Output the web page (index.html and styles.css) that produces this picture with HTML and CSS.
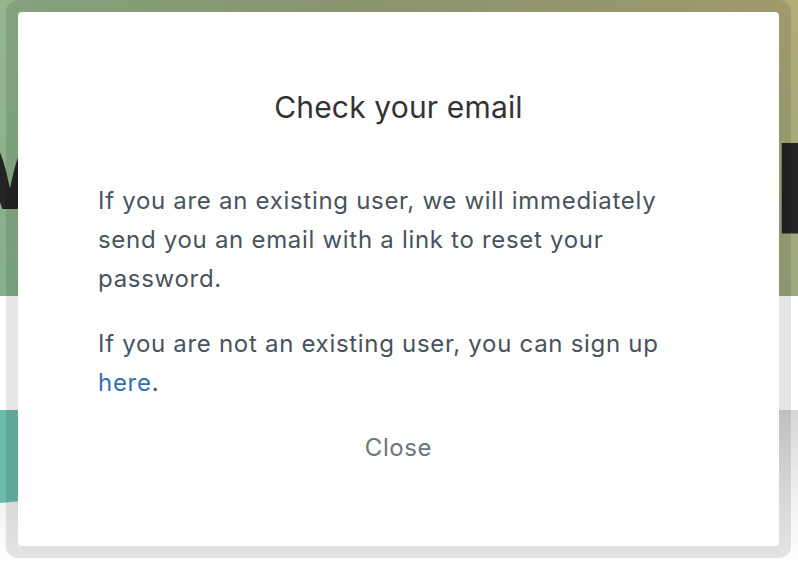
FILE: index.html
```html
<!DOCTYPE html>
<html lang="en">
<head>
<meta charset="utf-8">
<title>Check your email</title>
<link rel="stylesheet" href="styles.css">
</head>
<body>
<div class="page">
  <header class="hero">
    <div class="hero-title">
      <span class="hero-left">M</span>
      <span class="hero-right">p</span>
    </div>
  </header>
  <section class="gap-band"></section>
  <section class="lower">
    <div class="teal-card"></div>
  </section>
</div>

<div class="modal-frame">
  <div class="modal">
    <h2 class="modal-title">Check your email</h2>
    <p class="modal-text">If you are an existing user, we will immediately send you an email with a link to reset your password.</p>
    <p class="modal-text">If you are not an existing user, you can sign up <a class="modal-link" href="#">here</a>.</p>
    <div class="modal-actions">
      <button class="close-btn" type="button">Close</button>
    </div>
  </div>
</div>
</body>
</html>
```

FILE: styles.css
```css
html, body {
  margin: 0;
  padding: 0;
  background: #ffffff;
  font-family: Inter, "Noto Sans", "Liberation Sans", sans-serif;
}

.page {
  width: 798px;
  height: 564px;
  overflow: hidden;
}

.hero {
  height: 296px;
  background:
    linear-gradient(to bottom, rgba(255,255,255,0) 0%, rgba(90,160,140,0.25) 100%),
    linear-gradient(to right, #93b68c 0%, #9aa57c 45%, #b3ac79 100%);
  overflow: hidden;
}

.hero-title {
  display: flex;
  justify-content: space-between;
  align-items: baseline;
  padding-top: 106px;
  font-size: 120px;
  font-weight: 700;
  line-height: 1;
  color: #242424;
  white-space: nowrap;
}

.hero-left {
  margin-left: -46px;
}

.hero-right {
  margin-right: -52px;
}

.gap-band {
  height: 114px;
  background: #ffffff;
}

.lower {
  height: 154px;
  background: linear-gradient(to bottom, #d6d6d6 0%, #f2f2f2 60%, #ffffff 100%);
}

.teal-card {
  width: 200px;
  height: 93px;
  background: linear-gradient(to right, #6cbdad, #5f9f90);
  clip-path: polygon(0 0, 100% 0, 100% 80%, 0 100%);
}

.modal-frame {
  position: absolute;
  left: 6px;
  top: 0;
  width: 761px;
  height: 534px;
  padding: 12px;
  border-radius: 12px;
  background: rgba(0, 0, 0, 0.1);
}

.modal {
  height: 100%;
  box-sizing: border-box;
  background: #ffffff;
  border-radius: 4px;
  padding: 79px 80px 0 80px;
}

.modal-title {
  margin: 0 0 58px 0;
  text-align: center;
  font-size: 30px;
  line-height: 32px;
  font-weight: 400;
  letter-spacing: 0.15px;
  color: #333333;
}

.modal-text {
  margin: 0 0 26px 0;
  font-size: 24px;
  line-height: 39px;
  letter-spacing: 0.7px;
  color: #48535d;
}

.modal-link {
  color: #3270b6;
  text-decoration: none;
}

.modal-actions {
  display: flex;
  justify-content: center;
}

.close-btn {
  border: none;
  background: none;
  padding: 0;
  font-family: inherit;
  font-size: 24px;
  line-height: 39px;
  letter-spacing: 0.6px;
  color: #6c757d;
  cursor: pointer;
}
```
